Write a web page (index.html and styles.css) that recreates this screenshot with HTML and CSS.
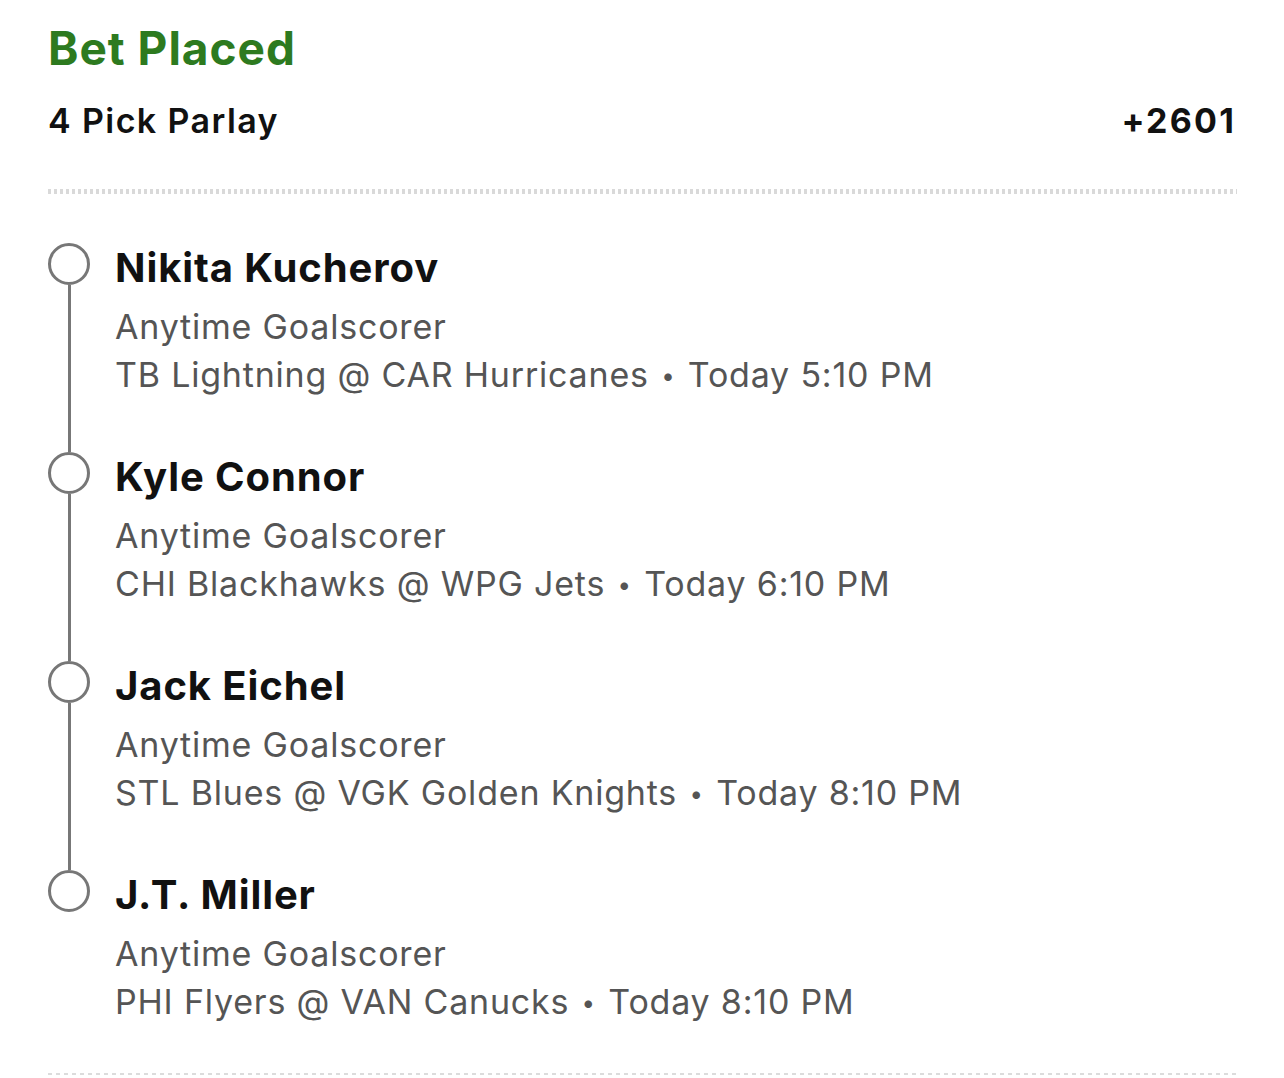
FILE: index.html
```html
<!DOCTYPE html>
<html lang="en">
<head>
<meta charset="utf-8">
<title>Bet Placed</title>
<link rel="stylesheet" href="styles.css">
</head>
<body>
<main class="slip">
  <h1 class="title">Bet Placed</h1>
  <div class="summary">
    <span class="bet-type">4 Pick Parlay</span>
    <span class="odds">+2601</span>
  </div>
  <div class="divider"></div>
  <ol class="legs">
    <li class="leg">
      <div class="marker"><span class="dot"></span><span class="stem"></span></div>
      <div class="info">
        <div class="player">Nikita Kucherov</div>
        <div class="market">Anytime Goalscorer</div>
        <div class="game">TB Lightning @ CAR Hurricanes <span class="sep">•</span> Today 5:10 PM</div>
      </div>
    </li>
    <li class="leg">
      <div class="marker"><span class="dot"></span><span class="stem"></span></div>
      <div class="info">
        <div class="player">Kyle Connor</div>
        <div class="market">Anytime Goalscorer</div>
        <div class="game">CHI Blackhawks @ WPG Jets <span class="sep">•</span> Today 6:10 PM</div>
      </div>
    </li>
    <li class="leg">
      <div class="marker"><span class="dot"></span><span class="stem"></span></div>
      <div class="info">
        <div class="player">Jack Eichel</div>
        <div class="market">Anytime Goalscorer</div>
        <div class="game">STL Blues @ VGK Golden Knights <span class="sep">•</span> Today 8:10 PM</div>
      </div>
    </li>
    <li class="leg last">
      <div class="marker"><span class="dot"></span></div>
      <div class="info">
        <div class="player">J.T. Miller</div>
        <div class="market">Anytime Goalscorer</div>
        <div class="game">PHI Flyers @ VAN Canucks <span class="sep">•</span> Today 8:10 PM</div>
      </div>
    </li>
  </ol>
  <div class="divider bottom"></div>
</main>
</body>
</html>
```
FILE: styles.css
```css
* { box-sizing: border-box; }
html, body { margin: 0; padding: 0; background: #fff; }
body {
  font-family: Inter, "Noto Sans", "Liberation Sans", sans-serif;
  color: #111;
}
.slip {
  padding: 21px 47px 0 48px;
  width: 1284px;
}
.title {
  margin: 0;
  font-size: 46px;
  line-height: 54px;
  font-weight: 700;
  color: #2d7a1f;
  letter-spacing: 1px;
}
.summary {
  margin-top: 26px;
  display: flex;
  justify-content: space-between;
  align-items: baseline;
  font-size: 34px;
  line-height: 40px;
  font-weight: 600;
  color: #111;
  letter-spacing: 1.4px;
}
.odds { padding-right: 1px; font-weight: 700; letter-spacing: 2.2px; }
.divider {
  margin-top: 48px;
  height: 5px;
  background: repeating-linear-gradient(90deg, #d9d9d9 0 3px, transparent 3px 6px);
}
.divider.bottom {
  margin-top: 20px;
  height: 2px;
  background: repeating-linear-gradient(90deg, #dcdcdc 0 4px, transparent 4px 8px);
}
.legs {
  list-style: none;
  margin: 49px 0 0 0;
  padding: 0;
}
.leg {
  display: flex;
  height: 209px;
}
.leg.last { height: 183px; }
.marker {
  width: 67px;
  flex: none;
  display: flex;
  flex-direction: column;
  align-items: center;
  padding-right: 25px;
}
.dot {
  width: 42px;
  height: 42px;
  flex: none;
  border: 3px solid #777;
  border-radius: 50%;
}
.stem {
  flex: 1;
  width: 3px;
  background: #777;
}
.info { padding-top: 1px; }
.player {
  font-size: 40px;
  line-height: 48px;
  font-weight: 700;
  color: #111;
  letter-spacing: 0.9px;
}
.market, .game {
  font-size: 34px;
  line-height: 49px;
  font-weight: 400;
  color: #555;
  letter-spacing: 0.8px;
}
.market { margin-top: 10px; }
.game { margin-top: -1px; }
.sep { font-size: 24px; vertical-align: 3px; padding: 0 2px; }
```
